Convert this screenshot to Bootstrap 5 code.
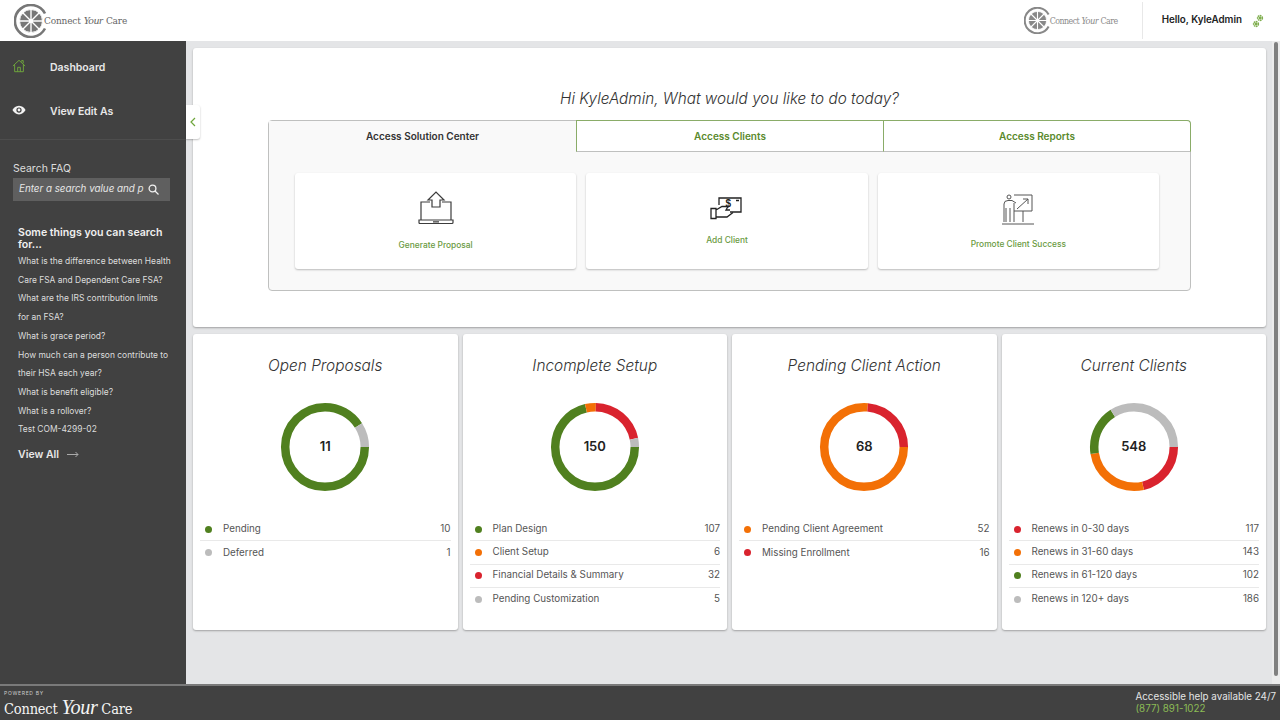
<!DOCTYPE html>
<html lang="en">
<head>
<meta charset="utf-8">
<title>Connect Your Care</title>
<link href="https://cdn.jsdelivr.net/npm/bootstrap@5.3.0/dist/css/bootstrap.min.css" rel="stylesheet">
<style>
html,body{height:100%;overflow:hidden}
body{font-family:Inter,"Liberation Sans",sans-serif;background:#e4e5e7;color:#333;font-size:10px}
.cy-top{height:41px;background:#fff;flex:none}
.cy-logo{font-family:"DejaVu Serif Condensed","DejaVu Serif",serif;font-stretch:condensed;color:#666;line-height:1;white-space:nowrap}
.cy-logo i{font-family:"Liberation Serif",serif;font-size:1.12em;letter-spacing:-.02em}
.cy-logo-a{font-size:10px;margin-left:-4px;letter-spacing:-.17px}
.cy-logo-b{font-size:8.800px;color:#8b8b8b;margin-left:-1px;letter-spacing:-.55px}
.cy-mark-a{color:#777}
.cy-mark-b{color:#888}
.cy-left{padding-left:14px}
.cy-user{border-left:1px solid #e8e8e8;height:37px;margin-right:16px;padding-left:19px;margin-left:24px;font-size:9.800px;font-weight:600;color:#222;gap:10px;letter-spacing:0}
.cy-side{width:186px;background:#414141;color:#ddd;flex:none;position:relative}
.cy-nav{height:99px;border-bottom:1px solid #4d4d4d;padding:5px 0 0 12px}
.cy-nav .nav-link{height:44px;padding:0;color:#e8e8e8;font-size:10.500px;font-weight:600;display:flex;align-items:center;gap:24px}
.cy-nav svg{width:14px;height:14px;flex:none;margin-top:-4px}
.cy-tab{position:absolute;left:186px;top:64px;width:14px;height:34px;background:#fff;border-radius:0 3px 3px 0;box-shadow:0 1px 2px rgba(0,0,0,.25);z-index:3}
.cy-search{padding:22px 16px 0 13px}
.cy-label{font-size:10.500px;color:#ddd;line-height:13px;margin-bottom:3px}
.cy-input{height:23px;background:#5f5f5f;padding:0 11px 0 6px;font-size:9.800px;font-style:italic;color:#e6e6e6}
.cy-input span{white-space:nowrap}
.cy-faq{padding:26px 10px 0 18px}
.cy-faq h6{font-size:10.600px;font-weight:600;line-height:12px;margin:0 0 1px;color:#f0f0f0}
.cy-faq .list-group-item{background:none;border:0;padding:0;color:#ddd;font-size:8.450px;line-height:18.700px;white-space:nowrap}
.cy-all{font-size:10.500px;font-weight:600;color:#e8e8e8;margin-top:8px;line-height:15px}
.cy-main{min-width:0}
.cy-row{min-height:0}
.cy-body{padding:7px 6px 0 7px;min-width:0}
.cy-card{border:0;border-radius:3px;box-shadow:0 1px 2px rgba(0,0,0,.3)}
.cy-hero{height:279px;padding:42px 75px 0;margin-bottom:7px}
.cy-ask{font-size:15.300px;font-style:italic;font-weight:300;text-align:center;line-height:18px;margin-bottom:12px;color:#333}
.cy-panel{height:171px;background:#f9f9f9;border:1px solid #bfc0bf;border-radius:4px}
.cy-tabs .nav-link{height:32px;width:100%;border-radius:0;border:0;padding:0;font-size:10px;font-weight:600;color:#5a8a2c;background:#fff;border-top:1px solid #8aac68;border-bottom:1px solid #bfc0bf;border-left:1px solid #8aac68;display:flex;align-items:center;justify-content:center;margin-top:-1px}
.cy-tabs .nav-item:last-child .nav-link{border-right:1px solid #8aac68;border-radius:0 4px 0 0;margin-right:-1px;width:calc(100% + 1px)}
.cy-tabs .nav-link.active{background:#f9f9f9;border:0;color:#333;margin-top:0;height:31px}
.cy-tile-row{padding:21px 26px 0 21px;--bs-gutter-x:10px;margin:0}
.cy-tile{height:96px;align-items:center;text-align:center;color:#6a9a3f;font-size:8.400px;font-weight:500;box-shadow:0 1px 2px rgba(0,0,0,.25)}
.cy-ico-up{margin-top:18px}.cy-lab-up{margin-top:14px}
.cy-ico-cash{margin-top:24px}.cy-lab-cash{margin-top:13px}
.cy-ico-prom{margin-top:21px}.cy-lab-prom{margin-top:13px}
.cy-stats{--bs-gutter-x:5px;margin:0 -2.500px}
.cy-stat{height:296px;padding:22px 7px 0}
.cy-stat h5{font-size:15.400px;font-style:italic;font-weight:300;text-align:center;margin:0 0 26px;line-height:20px;color:#333}
.cy-donut{position:relative;height:90px;margin-bottom:26px}
.cy-donut svg{width:90px;height:90px;display:block;margin:0 auto}
.cy-count{position:absolute;inset:0;font-size:13px;font-weight:600;color:#222}
.cy-stat .list-group-item{border:0;border-bottom:1px solid #e9e9e9;padding:0;height:23.300px;background:none;color:#555;font-size:9.800px;display:flex;align-items:center}
.cy-dot{width:7px;height:7px;border-radius:50%;margin:0 11px 0 5px;flex:none}
.c-g{background:#50801f}.c-o{background:#f37006}.c-r{background:#d9232e}.c-y{background:#bcbcbc}
.cy-bar{width:8px;background:#ececec;flex:none;padding:1px 2px 8px 2px}
.cy-thumb{background:#808080;height:100%;border-radius:3px}
.cy-foot{height:36px;background:#414141;border-top:2px solid #7a7a7a;flex:none;color:#e5e5e5;padding:0 4px}
.cy-power{font-size:5px;letter-spacing:.7px;line-height:6px;color:#ccc;padding-top:4px;margin-bottom:1px}
.cy-foot .cy-logo{color:#f5f5f5;font-size:14.500px;letter-spacing:-.2px}
.cy-foot .cy-logo i{font-size:1.400em}
.cy-help{font-size:9.800px;line-height:12px;padding-top:5px}
.cy-help div+div{color:#8cbc55}
</style>
</head>
<body class="d-flex flex-column">
<svg width="0" height="0" class="position-absolute">
<symbol id="cy-mark" viewBox="0 0 34 34">
<path d="M31 9.500A16 16 0 1 0 31 24.500" fill="none" stroke="currentColor" stroke-width="2.600"/>
<circle cx="17" cy="17" r="11.500" fill="currentColor"/>
<g stroke="#fff" stroke-width="1.400"><path d="M17 5v24M5 17h24M8.500 8.500l17 17M25.500 8.500l-17 17"/></g>
<circle cx="17" cy="17" r="11.500" fill="none" stroke="#fff" stroke-width="1"/>
<circle cx="17" cy="17" r="2" fill="#fff"/>
</symbol>
</svg>

<header class="cy-top d-flex align-items-center justify-content-between">
  <div class="cy-left d-flex align-items-center">
    <svg class="cy-mark-a" width="34" height="34"><use href="#cy-mark"/></svg>
    <span class="cy-logo cy-logo-a">Connect <i>Your</i> Care</span>
  </div>
  <div class="d-flex align-items-center">
    <svg class="cy-mark-b" width="27" height="27"><use href="#cy-mark"/></svg>
    <span class="cy-logo cy-logo-b">Connect <i>Your</i> Care</span>
    <div class="cy-user d-flex align-items-center">
      <span>Hello, KyleAdmin</span>
      <svg width="12" height="14" viewBox="0 0 12 14" fill="none" stroke="#7fae4e" stroke-width="1.500"><circle cx="8" cy="4" r="2.400" stroke-dasharray="1.500 .5"/><circle cx="4" cy="10" r="2.400" stroke-dasharray="1.500 .5"/><circle cx="8" cy="4" r=".7"/><circle cx="4" cy="10" r=".7"/></svg>
    </div>
  </div>
</header>

<div class="cy-row d-flex flex-grow-1">
  <aside class="cy-side">
    <nav class="cy-nav nav flex-column">
      <a class="nav-link" href="#"><svg viewBox="0 0 16 16" fill="none" stroke="#6fa53c" stroke-width="1.100"><path d="M1 8 8 1.500 15 8M3 6.500V14.500H13V6.500M6.500 14.500V9.500H9.500V14.500M11 3V1.800H12.800V5"/></svg>Dashboard</a>
      <a class="nav-link" href="#"><svg viewBox="0 0 16 16"><path fill="#f2f2f2" d="M8 3C4.500 3 1.800 5.500.5 8 1.800 10.500 4.500 13 8 13s6.200-2.500 7.500-5C14.200 5.500 11.500 3 8 3Z"/><circle cx="8" cy="8" r="3" fill="#414141"/><circle cx="8" cy="8" r="1.600" fill="#f2f2f2"/></svg>View Edit As</a>
    </nav>
    <button class="cy-tab btn p-0 d-flex align-items-center justify-content-center" type="button" aria-label="Collapse"><svg width="6" height="10" viewBox="0 0 6 10" fill="none" stroke="#6fa53c" stroke-width="1.200"><path d="M5 1 1 5l4 4"/></svg></button>
    <div class="cy-search">
      <div class="cy-label">Search FAQ</div>
      <div class="cy-input d-flex align-items-center justify-content-between"><span>Enter a search value and p</span><svg width="11" height="11" viewBox="0 0 11 11" fill="none" stroke="#f0f0f0" stroke-width="1.300"><circle cx="4.500" cy="4.500" r="3.400"/><path d="m7 7 3.500 3.500"/></svg></div>
    </div>
    <div class="cy-faq">
      <h6>Some things you can search for...</h6>
      <div class="list-group list-group-flush">
        <a class="list-group-item" href="#">What is the difference between Health<br>Care FSA and Dependent Care FSA?</a>
        <a class="list-group-item" href="#">What are the IRS contribution limits<br>for an FSA?</a>
        <a class="list-group-item" href="#">What is grace period?</a>
        <a class="list-group-item" href="#">How much can a person contribute to<br>their HSA each year?</a>
        <a class="list-group-item" href="#">What is benefit eligible?</a>
        <a class="list-group-item" href="#">What is a rollover?</a>
        <a class="list-group-item" href="#">Test COM-4299-02</a>
      </div>
      <div class="cy-all d-flex align-items-center gap-2">View All <svg width="12" height="7" viewBox="0 0 12 7" fill="none" stroke="#aaa"><path d="M0 3.500h11M8.500 1 11 3.500 8.500 6"/></svg></div>
    </div>
  </aside>

  <div class="cy-main d-flex flex-grow-1">
    <main class="cy-body flex-grow-1">
      <section class="card cy-card cy-hero">
        <div class="cy-ask">Hi KyleAdmin, What would you like to do today?</div>
        <div class="cy-panel">
          <ul class="cy-tabs nav nav-justified">
            <li class="nav-item"><a class="nav-link active" href="#">Access Solution Center</a></li>
            <li class="nav-item"><a class="nav-link" href="#">Access Clients</a></li>
            <li class="nav-item"><a class="nav-link" href="#">Access Reports</a></li>
          </ul>
          <div class="row cy-tile-row">
            <div class="col-4">
              <div class="card cy-card cy-tile">
                <svg class="cy-ico-up" width="36" height="34" viewBox="0 0 36 34" fill="none" stroke="#3c3c3c" stroke-width="1.200"><path d="M12 11H3V29H33V11H24M1 29H35V31.500Q35 32.500 34 32.500H2Q1 32.500 1 31.500ZM15 30.800H21M14 16V9H10L18 1 26 9H22V16H14Z" /></svg>
                <div class="cy-lab-up">Generate Proposal</div>
              </div>
            </div>
            <div class="col-4">
              <div class="card cy-card cy-tile">
                <svg class="cy-ico-cash" width="33" height="24" viewBox="0 0 33 24" fill="none" stroke="#222" stroke-width="1.300"><path d="M9 8V1H31V15H20M26 3.500H29"/><path d="M1 11.500H6V21.500H1ZM6 13 12 9.500H18L16 13H20M6 20H17L23 15.500"/><text x="15.500" y="10" font-size="10" font-weight="700" fill="#222" stroke="none" font-family="Liberation Sans">$</text></svg>
                <div class="cy-lab-cash">Add Client</div>
              </div>
            </div>
            <div class="col-4">
              <div class="card cy-card cy-tile">
                <svg class="cy-ico-prom" width="32" height="31" viewBox="0 0 32 31" fill="none" stroke="#555"><circle cx="7" cy="3" r="2"/><path d="M2 28V10Q2 6.500 6 6.500H10L14 9M4 14V28M8 14V28M12 9V28M12 1H30V17H12M21 17V28M0 30H32M15 15 26 5M21 5H26V10" /></svg>
                <div class="cy-lab-prom">Promote Client Success</div>
              </div>
            </div>
          </div>
        </div>
      </section>

      <div class="row cy-stats">
        <div class="col-3">
          <section class="card cy-card cy-stat">
            <h5>Open Proposals</h5>
            <div class="cy-donut">
              <svg viewBox="0 0 90 90" fill="none" stroke-width="8.500"><circle cx="45" cy="45" r="39.800" stroke="#50801f" pathLength="11" stroke-dasharray="10 1"/><circle cx="45" cy="45" r="39.800" stroke="#bcbcbc" pathLength="11" stroke-dasharray="1 10" stroke-dashoffset="-10"/></svg>
              <div class="cy-count d-flex align-items-center justify-content-center">11</div>
            </div>
            <ul class="list-group list-group-flush">
              <li class="list-group-item"><span class="cy-dot c-g"></span>Pending<span class="ms-auto">10</span></li>
              <li class="list-group-item"><span class="cy-dot c-y"></span>Deferred<span class="ms-auto">1</span></li>
            </ul>
          </section>
        </div>
        <div class="col-3">
          <section class="card cy-card cy-stat">
            <h5>Incomplete Setup</h5>
            <div class="cy-donut">
              <svg viewBox="0 0 90 90" fill="none" stroke-width="8.500"><circle cx="45" cy="45" r="39.800" stroke="#50801f" pathLength="150" stroke-dasharray="107 43"/><circle cx="45" cy="45" r="39.800" stroke="#f37006" pathLength="150" stroke-dasharray="6 144" stroke-dashoffset="-107"/><circle cx="45" cy="45" r="39.800" stroke="#d9232e" pathLength="150" stroke-dasharray="32 118" stroke-dashoffset="-113"/><circle cx="45" cy="45" r="39.800" stroke="#bcbcbc" pathLength="150" stroke-dasharray="5 145" stroke-dashoffset="-145"/></svg>
              <div class="cy-count d-flex align-items-center justify-content-center">150</div>
            </div>
            <ul class="list-group list-group-flush">
              <li class="list-group-item"><span class="cy-dot c-g"></span>Plan Design<span class="ms-auto">107</span></li>
              <li class="list-group-item"><span class="cy-dot c-o"></span>Client Setup<span class="ms-auto">6</span></li>
              <li class="list-group-item"><span class="cy-dot c-r"></span>Financial Details &amp; Summary<span class="ms-auto">32</span></li>
              <li class="list-group-item"><span class="cy-dot c-y"></span>Pending Customization<span class="ms-auto">5</span></li>
            </ul>
          </section>
        </div>
        <div class="col-3">
          <section class="card cy-card cy-stat">
            <h5>Pending Client Action</h5>
            <div class="cy-donut">
              <svg viewBox="0 0 90 90" fill="none" stroke-width="8.500"><circle cx="45" cy="45" r="39.800" stroke="#f37006" pathLength="68" stroke-dasharray="52 16"/><circle cx="45" cy="45" r="39.800" stroke="#d9232e" pathLength="68" stroke-dasharray="16 52" stroke-dashoffset="-52"/></svg>
              <div class="cy-count d-flex align-items-center justify-content-center">68</div>
            </div>
            <ul class="list-group list-group-flush">
              <li class="list-group-item"><span class="cy-dot c-o"></span>Pending Client Agreement<span class="ms-auto">52</span></li>
              <li class="list-group-item"><span class="cy-dot c-r"></span>Missing Enrollment<span class="ms-auto">16</span></li>
            </ul>
          </section>
        </div>
        <div class="col-3">
          <section class="card cy-card cy-stat">
            <h5>Current Clients</h5>
            <div class="cy-donut">
              <svg viewBox="0 0 90 90" fill="none" stroke-width="8.500"><circle cx="45" cy="45" r="39.800" stroke="#d9232e" pathLength="548" stroke-dasharray="117 431"/><circle cx="45" cy="45" r="39.800" stroke="#f37006" pathLength="548" stroke-dasharray="143 405" stroke-dashoffset="-117"/><circle cx="45" cy="45" r="39.800" stroke="#50801f" pathLength="548" stroke-dasharray="102 446" stroke-dashoffset="-260"/><circle cx="45" cy="45" r="39.800" stroke="#bcbcbc" pathLength="548" stroke-dasharray="186 362" stroke-dashoffset="-362"/></svg>
              <div class="cy-count d-flex align-items-center justify-content-center">548</div>
            </div>
            <ul class="list-group list-group-flush">
              <li class="list-group-item"><span class="cy-dot c-r"></span>Renews in 0-30 days<span class="ms-auto">117</span></li>
              <li class="list-group-item"><span class="cy-dot c-o"></span>Renews in 31-60 days<span class="ms-auto">143</span></li>
              <li class="list-group-item"><span class="cy-dot c-g"></span>Renews in 61-120 days<span class="ms-auto">102</span></li>
              <li class="list-group-item"><span class="cy-dot c-y"></span>Renews in 120+ days<span class="ms-auto">186</span></li>
            </ul>
          </section>
        </div>
      </div>
    </main>
    <div class="cy-bar"><div class="cy-thumb"></div></div>
  </div>
</div>

<footer class="cy-foot d-flex justify-content-between">
  <div>
    <div class="cy-power">POWERED BY</div>
    <div class="cy-logo">Connect <i>Your</i> Care</div>
  </div>
  <div class="cy-help">
    <div>Accessible help available 24/7</div>
    <div>(877) 891-1022</div>
  </div>
</footer>
</body>
</html>
